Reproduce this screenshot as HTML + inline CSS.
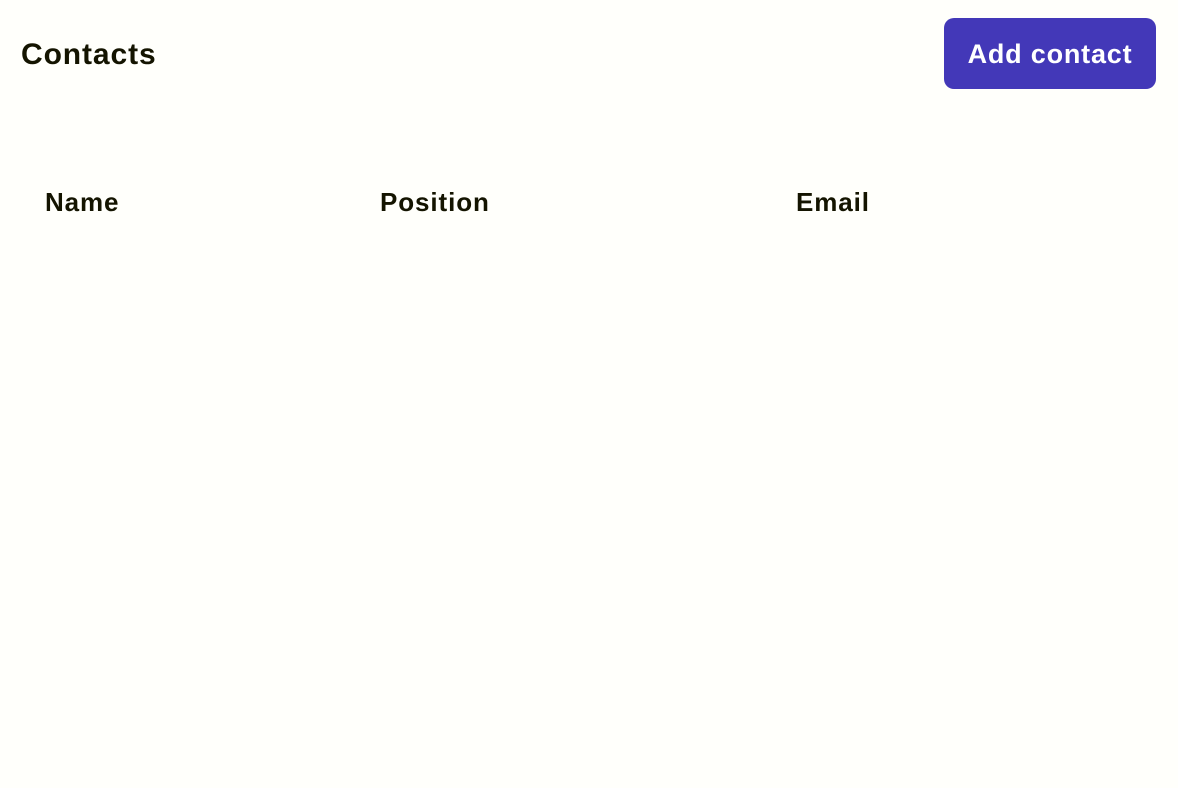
<!DOCTYPE html>
<html><head><meta charset="utf-8"><style>
html,body{margin:0;padding:0;background:#fffffb;width:1178px;height:788px;overflow:hidden;font-family:"Liberation Sans",sans-serif;color:#141400}
h1{position:absolute;left:21px;top:38px;margin:0;font-size:30px;font-weight:bold;letter-spacing:0.9px}
.btn{position:absolute;left:944px;top:18px;width:212px;height:71px;background:#4338b8;border-radius:10px;color:#fff;font-weight:bold;font-size:27px;line-height:72px;text-align:center;letter-spacing:0.8px}
.th{position:absolute;top:187px;font-size:26px;font-weight:bold;letter-spacing:0.9px}
</style></head><body>
<h1>Contacts</h1>
<div class="btn">Add contact</div>
<div class="th" style="left:45px">Name</div>
<div class="th" style="left:380px">Position</div>
<div class="th" style="left:796px">Email</div>
</body></html>
